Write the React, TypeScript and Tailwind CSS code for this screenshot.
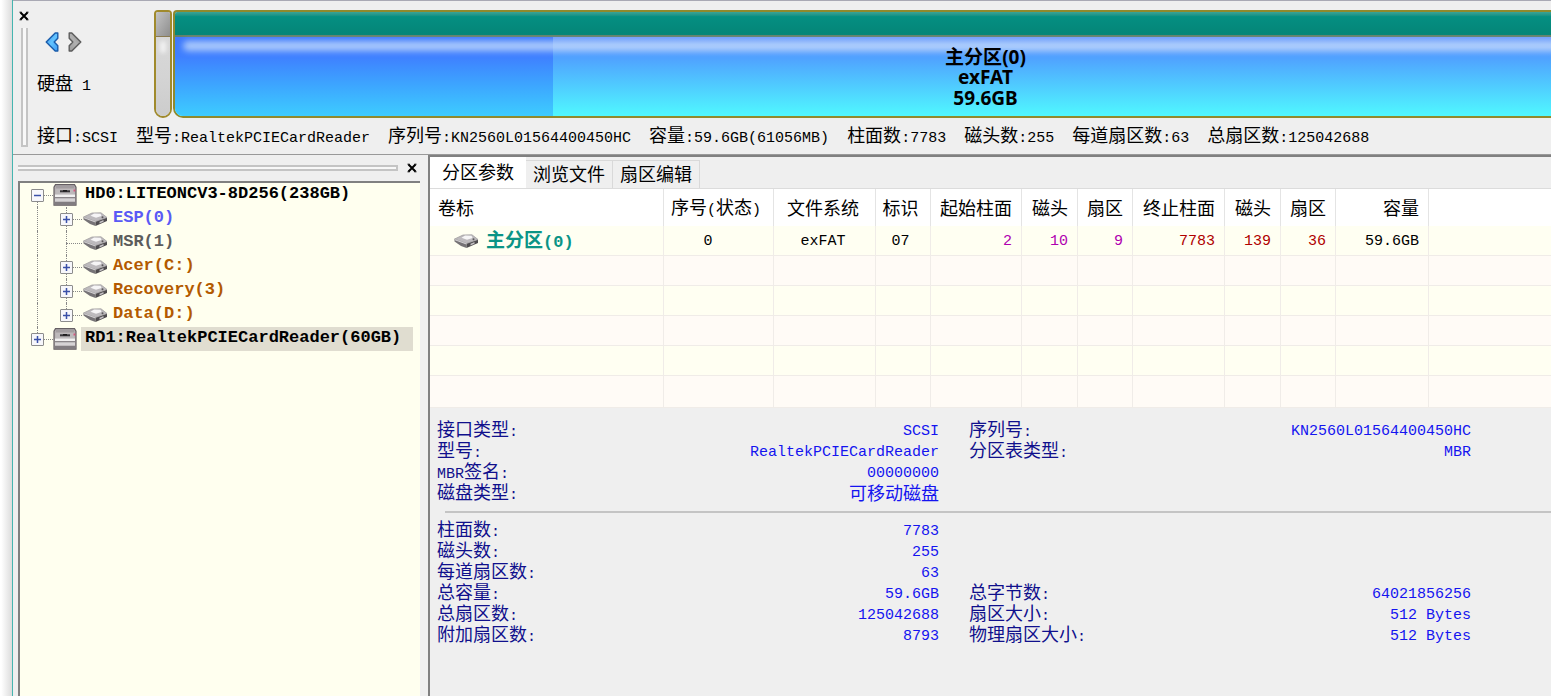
import { useId, useState } from "react";
import clsx from "clsx";

type Tone = "body" | "bold" | "caption";

const cjkStyle: Record<Tone, string> = {
  body: "font-['Noto_Sans_CJK_SC',sans-serif] text-[18px]",
  bold: "font-['Noto_Sans_CJK_SC',sans-serif] text-[19px] font-bold",
  caption: "font-['Noto_Sans_CJK_SC',sans-serif] text-[19px] font-bold",
};

const latinStyle: Record<Tone, string> = {
  body: "font-['Liberation_Mono',monospace] text-[15px]",
  bold: "font-['Liberation_Mono',monospace] text-[17px] font-bold",
  caption: "font-['Noto_Sans',sans-serif] text-[19px] font-bold",
};

// Half-width runs take half the advance of a full-width glyph, so the two
// scripts get their own family and size.
function Txt({ children, tone = "body" }: { children: string; tone?: Tone }) {
  const runs = children.split(/([\u3000-\u9fff]+)/).filter(Boolean);
  return (
    <span className="whitespace-pre">
      {runs.map((run, i) => (
        <span key={i} className={/[\u3000-\u9fff]/.test(run) ? cjkStyle[tone] : latinStyle[tone]}>
          {run}
        </span>
      ))}
    </span>
  );
}

function CloseButton({ label }: { label: string }) {
  return (
    <button type="button" aria-label={label} className="flex size-3 shrink-0 items-center justify-center">
      <svg viewBox="0 0 10 10" className="size-[10px]" fill="none" stroke="#000" strokeWidth="2">
        <path d="M1.5 1.5 8.5 8.5M8.5 1.5 1.5 8.5" />
        <path d="M.5 1.2h2M7.5 1.2h2M.5 8.8h2M7.5 8.8h2" strokeWidth="1" />
      </svg>
    </button>
  );
}

function ArrowIcon({ active }: { active?: boolean }) {
  const id = useId();
  return (
    <svg viewBox="0 0 14 20" className={clsx("h-5 w-[14px]", !active && "-scale-x-100")}>
      <linearGradient id={id} x1="0" y1="0" x2="1" y2="1">
        <stop offset="0" stopColor={active ? "#3d8fe8" : "#8a8a8a"} />
        <stop offset="0.5" stopColor={active ? "#63c4ff" : "#b0b0b0"} />
        <stop offset="1" stopColor={active ? "#3a9af5" : "#999"} />
      </linearGradient>
      <path
        d="M10.2 1h2.600v5.200L9.200 10l3.600 3.800V19h-2.600L1.200 10z"
        fill={`url(#${id})`}
        stroke={active ? "#1a5cab" : "#5c5c5c"}
        strokeWidth="1.400"
        strokeLinejoin="round"
      />
    </svg>
  );
}

function DiskIcon() {
  return (
    <svg viewBox="0 0 24 22" className="h-[22px] w-6 shrink-0">
      <path d="M2.500.7h19l1.500 2.500v18H1v-18z" fill="#b3adb0" stroke="#655f63" strokeWidth="1.200" />
      <path d="M3 1.800h18v2.400H3z" fill="#a29da0" />
      <path d="M2.500 5h19v5h-19z" fill="#bdb9bb" />
      <path d="M7 6.300h10v2H7z" fill="#39363a" />
      <path d="M10 6.300h4v1h-4z" fill="#000" />
      <path d="M20.500 5.500h1.800v2h-1.800z" fill="#d8577f" />
      <path d="M2 10.500h20v2.700H2z" fill="#f1f0f0" />
      <path d="M2 13.200h20v1.200H2z" fill="#7d7a7d" />
      <path d="M2 14.400h20v3.400H2z" fill="#d6d3d5" />
      <path d="M1.500 17.800h21v3.200h-21z" fill="#817c80" />
    </svg>
  );
}

function VolumeIcon() {
  return (
    <svg viewBox="0 0 26 16" className="h-4 w-[26px] shrink-0">
      <path d="M1.500 6 13.500 10.500V15L8 13 1.500 8.500z" fill="#767376" />
      <path d="M13.500 10.500 25 6.500V10L13.500 15z" fill="#4f4c4f" />
      <path d="M1.500 6 10 2l9-.2 6 4.700-11.500 4z" fill="#bdbabd" stroke="#9b989b" strokeWidth=".7" />
      <path d="M8.500 4.800 12 2.600l6.500.2 1 2.200-5.500 1.800z" fill="#f6f5f6" />
      <path d="M2 6.800 13.400 11" stroke="#dddadd" strokeWidth=".9" />
      <path d="M17.500 10.700l4-1.600v1.700l-4 1.700z" fill="#c4c1c4" />
      <circle cx="20.500" cy="6.200" r="1" fill="#5b585b" />
    </svg>
  );
}

function Expander({ open, name }: { open?: boolean; name: string }) {
  return (
    <button
      type="button"
      aria-label={`${open ? "折叠" : "展开"} ${name}`}
      className="relative flex size-[13px] shrink-0 items-center justify-center rounded-[1px] border border-[#8c8c8c] bg-[#f7f7fb]"
    >
      <svg viewBox="0 0 9 9" className="size-[9px] shrink-0" stroke="#3a50a8" strokeWidth="1.500">
        <path d={open ? "M1 4.500h7" : "M1 4.500h7M4.500 1v7"} />
      </svg>
    </button>
  );
}

const dotted = "absolute border-dotted border-[#888]";

const volumes = [
  { name: "ESP(0)", color: "text-[#5a5af5]", leaf: false },
  { name: "MSR(1)", color: "text-[#5c5c5c]", leaf: true },
  { name: "Acer(C:)", color: "text-[#b35a00]", leaf: false },
  { name: "Recovery(3)", color: "text-[#b35a00]", leaf: false },
  { name: "Data(D:)", color: "text-[#b35a00]", leaf: false },
];

function DiskRow({ name, open, selected }: { name: string; open?: boolean; selected?: boolean }) {
  return (
    <div className="flex h-6 items-center">
      <span className="relative flex h-full w-[33px] shrink-0 items-center pl-[11px]">
        <span className={clsx(dotted, "left-[17px] border-l", open ? "top-1/2 bottom-0" : "top-0 bottom-1/2")} />
        <span className={clsx(dotted, "top-1/2 right-0 left-6 border-t")} />
        <Expander open={open} name={name} />
      </span>
      <DiskIcon />
      <span className={clsx("ml-1 flex h-6 items-center pr-3 pb-1 pl-1", selected && "bg-[#e0ddd0]")}>
        <Txt tone="bold">{name}</Txt>
      </span>
    </div>
  );
}

function DiskTree() {
  return (
    <ul className="leading-[20px] text-black">
      <li>
        <DiskRow name="HD0:LITEONCV3-8D256(238GB)" open />
        <ul>
          {volumes.map((v, i) => (
            <li key={v.name} className="flex h-6 items-center">
              <span className="relative h-full w-10 shrink-0">
                <span className={clsx(dotted, "top-0 bottom-0 left-[17px] border-l")} />
              </span>
              <span className="relative flex h-full w-[22px] shrink-0 items-center">
                <span className={clsx(dotted, "top-0 left-[6px] border-l", i === volumes.length - 1 ? "bottom-1/2" : "bottom-0")} />
                <span className={clsx(dotted, "top-1/2 right-0 left-[6px] border-t")} />
                {!v.leaf && <Expander name={v.name} />}
              </span>
              <VolumeIcon />
              <span className={clsx("ml-[5px] pb-1", v.color)}>
                <Txt tone="bold">{v.name}</Txt>
              </span>
            </li>
          ))}
        </ul>
      </li>
      <li>
        <DiskRow name="RD1:RealtekPCIECardReader(60GB)" selected />
      </li>
    </ul>
  );
}

const diskFacts = [
  "接口:SCSI",
  "型号:RealtekPCIECardReader",
  "序列号:KN2560L01564400450HC",
  "容量:59.6GB(61056MB)",
  "柱面数:7783",
  "磁头数:255",
  "每道扇区数:63",
  "总扇区数:125042688",
];

function DiskPanel() {
  return (
    <section className="flex flex-col overflow-hidden border-t border-b border-t-[#a9a9b4] border-b-[#999] pb-[7px]">
      <div className="flex pt-[9px]">
        <div className="flex w-[141px] shrink-0 flex-col">
          <div className="flex pl-[5px]">
            <CloseButton label="关闭磁盘面板" />
          </div>
          <div className="flex flex-1">
            <div className="mt-[6px] ml-2 w-[7px] shrink-0 border-x-2 border-[#c4c4c4] bg-[#f8f8f8]" />
            <div className="flex flex-col pl-[9px]">
              <div className="flex gap-[9px] pt-[10px] pl-2">
                <button type="button" aria-label="上一个磁盘">
                  <ArrowIcon active />
                </button>
                <button type="button" aria-label="下一个磁盘">
                  <ArrowIcon />
                </button>
              </div>
              <div className="mt-[18px] leading-6">
                <Txt>硬盘 1</Txt>
              </div>
            </div>
          </div>
        </div>
        <div className="flex h-[108px] w-[18px] shrink-0 flex-col overflow-hidden rounded-t-[4px] rounded-b-[9px] border-2 border-[#a08a2c]">
          <div className="h-[25px] border-b border-[#8a7a50] bg-linear-to-br from-[#c4c4c4] to-[#8e8e8e]" />
          <div className="flex-1 bg-linear-to-b from-[#d8d8d8] via-[#d4d4d4] to-[#cccccc] pt-1">
            <div className="mx-1 h-3 rounded-full bg-white/70 blur-[2px]" />
          </div>
        </div>
        <div className="ml-px flex h-[108px] min-w-0 flex-1 flex-col overflow-hidden rounded-tl-[4px] rounded-bl-[10px] border-y-2 border-l-2 border-[#8f8a2e]">
          <div className="h-[25px] border-b-2 border-[#64806a] bg-linear-to-b from-[#3aa396] via-[#058f82] via-20% to-[#058577]" />
          <div className="relative flex-1 bg-linear-to-b from-[#6f9bfb] via-[#50a0ff] via-25% to-[#50f8ff]">
            <div className="h-full w-[27.5%] bg-linear-to-b from-[#3f78fb] via-[#3f80ff] via-25% to-[#3eccff]" />
            <div className="absolute top-1 -right-3 left-2 h-[10px] rounded-l-full bg-[#c4dcfb]/80 blur-[3px]" />
            <div className="absolute inset-0 flex flex-col items-center pt-[9px] pl-[245px] text-black">
              {["主分区(0)", "exFAT", "59.6GB"].map((line) => (
                <div key={line} className="flex h-[21px] items-center leading-[21px]">
                  <Txt tone="caption">{line}</Txt>
                </div>
              ))}
            </div>
          </div>
        </div>
      </div>
      <div className="flex">
        <div className="ml-2 w-[7px] shrink-0 border-x-2 border-b-2 border-[#c4c4c4] bg-[#f8f8f8]" />
        <ul className="flex h-[29px] items-center gap-[18px] pt-2 pl-[9px] leading-[21px]">
          {diskFacts.map((fact) => (
            <li key={fact}>
              <Txt>{fact}</Txt>
            </li>
          ))}
        </ul>
      </div>
    </section>
  );
}

const columns = [
  { label: "卷标", width: "w-[234px]", align: "text-left pl-2" },
  { label: "序号(状态)", width: "w-[110px]", align: "text-center pr-[21px]" },
  { label: "文件系统", width: "w-[102px]", align: "text-center pr-[3px]" },
  { label: "标识", width: "w-[55px]", align: "text-center pr-[5px]" },
  { label: "起始柱面", width: "w-[91px]", align: "text-right pr-[9px]" },
  { label: "磁头", width: "w-[56px]", align: "text-right pr-[9px]" },
  { label: "扇区", width: "w-[55px]", align: "text-right pr-[9px]" },
  { label: "终止柱面", width: "w-[92px]", align: "text-right pr-[9px]" },
  { label: "磁头", width: "w-[56px]", align: "text-right pr-[9px]" },
  { label: "扇区", width: "w-[55px]", align: "text-right pr-[9px]" },
  { label: "容量", width: "w-[93px]", align: "text-right pr-[9px]" },
];

const START = "text-[#b000b0]";
const END = "text-[#b00000]";

const partition = [
  { value: "0" },
  { value: "exFAT" },
  { value: "07" },
  { value: "2", color: START },
  { value: "10", color: START },
  { value: "9", color: START },
  { value: "7783", color: END },
  { value: "139", color: END },
  { value: "36", color: END },
  { value: "59.6GB" },
];

function PartitionTable() {
  return (
    <table className="w-full table-fixed border-separate border-spacing-0 leading-[21px]">
      <thead>
        <tr className="h-[37px] bg-white">
          {columns.map((c, i) => (
            <th
              key={i}
              scope="col"
              className={clsx(
                "border-r border-[#e4e4e4] pt-[2px] pb-0 font-normal",
                c.width,
                i === 1 ? "pr-[5px] text-center" : c.align,
              )}
            >
              <Txt>{c.label}</Txt>
            </th>
          ))}
          <td />
        </tr>
      </thead>
      <tbody className="[&_td]:border-b [&_td]:border-[#f0ece8]">
        <tr className="h-[30px] bg-[#fffff2]">
          <td className="border-r p-0 pl-[23px]">
            <span className="flex items-center gap-[7px] text-[#0b9486]">
              <VolumeIcon />
              <Txt tone="bold">主分区(0)</Txt>
            </span>
          </td>
          {partition.map((cell, i) => (
            <td key={i} className={clsx("border-r py-0", columns[i + 1].align, cell.color)}>
              <Txt>{cell.value}</Txt>
            </td>
          ))}
          <td />
        </tr>
        {[0, 1, 2, 3, 4].map((row) => (
          <tr key={row} className="h-[30px] odd:bg-[#fffff2] even:bg-[#fffbf6] last:h-8">
            {columns.map((_, i) => (
              <td key={i} className="border-r p-0" />
            ))}
            <td />
          </tr>
        ))}
      </tbody>
    </table>
  );
}

type Pair = [label: string, value: string];

const identity: Pair[][] = [
  [["接口类型:", "SCSI"], ["序列号:", "KN2560L01564400450HC"]],
  [["型号:", "RealtekPCIECardReader"], ["分区表类型:", "MBR"]],
  [["MBR签名:", "00000000"]],
  [["磁盘类型:", "可移动磁盘"]],
];

const geometry: Pair[][] = [
  [["柱面数:", "7783"]],
  [["磁头数:", "255"]],
  [["每道扇区数:", "63"]],
  [["总容量:", "59.6GB"], ["总字节数:", "64021856256"]],
  [["总扇区数:", "125042688"], ["扇区大小:", "512 Bytes"]],
  [["附加扇区数:", "8793"], ["物理扇区大小:", "512 Bytes"]],
];

function Facts({ rows }: { rows: Pair[][] }) {
  return (
    <dl className="pl-[7px] leading-[21px]">
      {rows.map((row, i) => (
        <div key={i} className="flex h-[21px] gap-[30px]">
          {row.map(([label, value]) => (
            <div key={label} className="flex h-[21px] w-[502px] items-center justify-between">
              <dt className="text-[#10108c]">
                <Txt>{label}</Txt>
              </dt>
              <dd className="text-[#1414f0]">
                <Txt>{value}</Txt>
              </dd>
            </div>
          ))}
        </div>
      ))}
    </dl>
  );
}

const tabs = ["分区参数", "浏览文件", "扇区编辑"];

function PartitionPanel() {
  const [tab, setTab] = useState(tabs[0]);
  return (
    <main className="min-w-0 flex-1 overflow-hidden border-t-2 border-l-2 border-[#808080]">
      <div role="tablist" className="flex h-8 items-end border-b border-[#dcdcdc] leading-[21px]">
        {tabs.map((t) => (
          <button
            key={t}
            type="button"
            role="tab"
            aria-selected={t === tab}
            onClick={() => setTab(t)}
            className={clsx(
              "flex items-center border-t border-r",
              t === tab ? "h-[31px] border-transparent bg-white pr-[11px] pb-[2px] pl-3" : "h-7 border-[#d9d9d9] px-[7px]",
            )}
          >
            <Txt>{t}</Txt>
          </button>
        ))}
      </div>
      <PartitionTable />
      <div className="pt-3 pb-2">
        <Facts rows={identity} />
        <hr className="my-[7px] ml-[15px] border-t-2 border-[#c4c4c4]" />
        <Facts rows={geometry} />
      </div>
    </main>
  );
}

export default function App() {
  return (
    <div className="flex min-h-screen overflow-hidden bg-[#efefef] text-black">
      <div className="w-[13px] shrink-0 border-r border-[#45b5b0] bg-linear-to-r from-white from-10% to-[#dcdcdc]" />
      <div className="flex min-w-0 flex-1 flex-col">
        <DiskPanel />
        <div className="flex flex-1">
          <aside className="flex w-[415px] shrink-0 flex-col pr-2 pl-[5px]">
            <div className="flex h-[26px] items-center gap-2 pr-[2px]">
              <div className="h-[6px] flex-1 border-y-2 border-r-2 border-[#c4c4c4] bg-[#f8f8f8]" />
              <CloseButton label="关闭树形面板" />
            </div>
            <div className="flex-1 border-t-2 border-l-2 border-[#808080] bg-[#ffffef]">
              <DiskTree />
            </div>
          </aside>
          <PartitionPanel />
        </div>
      </div>
    </div>
  );
}
